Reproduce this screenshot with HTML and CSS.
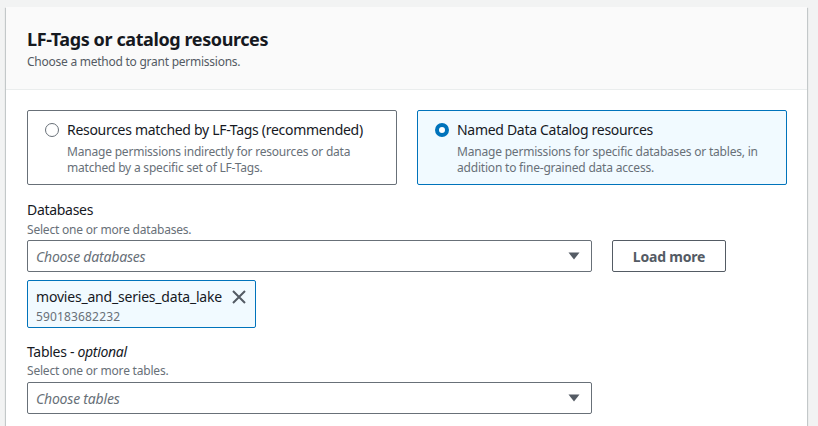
FILE: index.html
```html
<!DOCTYPE html>
<html>
<head>
<meta charset="utf-8">
<link rel="stylesheet" href="styles.css">
</head>
<body>
<div class="page">
  <section class="card">
    <header class="card-header">
      <h2 class="title">LF-Tags or catalog resources</h2>
      <p class="subtitle">Choose a method to grant permissions.</p>
    </header>
    <div class="card-body">
      <div class="tiles">
        <div class="tile">
          <span class="radio"></span>
          <div class="tile-text">
            <div class="tile-label">Resources matched by LF-Tags (recommended)</div>
            <div class="tile-desc">Manage permissions indirectly for resources or data matched by a specific set of LF-Tags.</div>
          </div>
        </div>
        <div class="tile selected">
          <span class="radio checked"></span>
          <div class="tile-text">
            <div class="tile-label">Named Data Catalog resources</div>
            <div class="tile-desc">Manage permissions for specific databases or tables, in addition to fine-grained data access.</div>
          </div>
        </div>
      </div>

      <div class="field">
        <div class="label">Databases</div>
        <div class="desc">Select one or more databases.</div>
        <div class="control-row">
          <div class="select">
            <span class="placeholder">Choose databases</span>
            <svg class="caret" width="12" height="8" viewBox="0 0 12 8"><path d="M0.5 0.5 H11.5 L6 7.5 Z" fill="#545b64"/></svg>
          </div>
          <button class="btn">Load more</button>
        </div>
        <div class="token">
          <div class="token-text">
            <div class="token-name">movies_and_series_data_lake</div>
            <div class="token-id">590183682232</div>
          </div>
          <svg class="token-x" width="16" height="16" viewBox="0 0 16 16"><path d="M2 2 L14 14 M14 2 L2 14" stroke="#545b64" stroke-width="2" fill="none"/></svg>
        </div>
      </div>

      <div class="field tables">
        <div class="label">Tables - <i>optional</i></div>
        <div class="desc">Select one or more tables.</div>
        <div class="control-row">
          <div class="select">
            <span class="placeholder">Choose tables</span>
            <svg class="caret" width="12" height="8" viewBox="0 0 12 8"><path d="M0.5 0.5 H11.5 L6 7.5 Z" fill="#545b64"/></svg>
          </div>
        </div>
      </div>
    </div>
  </section>
</div>
</body>
</html>
```
FILE: styles.css
```css
html, body {
  margin: 0;
  padding: 0;
  height: 100%;
  overflow: hidden;
}
body {
  background: #f2f3f3;
  font-family: "Noto Sans", "Open Sans", sans-serif;
  color: #16191f;
}
.page {
  padding: 7px 11px 0 6px;
}
.card {
  background: #ffffff;
  box-shadow: 0 1px 1px 0 rgba(0, 28, 36, 0.3), 1px 1px 1px 0 rgba(0, 28, 36, 0.15), -1px 1px 1px 0 rgba(0, 28, 36, 0.15);
  min-height: 500px;
}
.card-header {
  background: #fafafa;
  border-bottom: 1px solid #eaeded;
  padding: 21px 21px 19px;
}
.title {
  margin: 0;
  font-size: 18px;
  line-height: 22px;
  font-weight: 700;
  letter-spacing: -0.4px;
  color: #16191f;
}
.subtitle {
  margin: 4px 0 0;
  font-size: 12px;
  line-height: 16px;
  letter-spacing: -0.25px;
  color: #545b64;
}
.card-body {
  padding: 20px 21px 0;
}
.tiles {
  display: grid;
  grid-template-columns: 370px 370px;
  column-gap: 20px;
}
.tile {
  display: flex;
  align-items: flex-start;
  gap: 8px;
  border: 1px solid #687078;
  border-radius: 2px;
  padding: 9px 16px 8px 17px;
}
.tile.selected {
  border-color: #0073bb;
  background: #f1faff;
}
.radio {
  flex: none;
  box-sizing: border-box;
  width: 14px;
  height: 14px;
  margin-top: 3px;
  border-radius: 50%;
  border: 1px solid #687078;
  background: #fff;
}
.radio.checked {
  border: 4px solid #0073bb;
}
.tile-label {
  font-size: 14px;
  line-height: 20px;
  letter-spacing: -0.3px;
  color: #16191f;
}
.tile-desc {
  margin-top: 4px;
  font-size: 12px;
  line-height: 16px;
  letter-spacing: -0.2px;
  color: #687078;
}
.field {
  margin-top: 15px;
}
.field.tables {
  margin-top: 14px;
}
.label {
  height: 20px;
  font-size: 14px;
  line-height: 20px;
  letter-spacing: -0.3px;
  color: #16191f;
}
.desc {
  margin-top: 2px;
  font-size: 12px;
  line-height: 16px;
  letter-spacing: -0.2px;
  color: #687078;
}
.tables .desc {
  margin-top: 1px;
}
.control-row {
  display: flex;
  gap: 20px;
  margin-top: 2px;
}
.tables .control-row {
  margin-top: 3px;
}
.select {
  box-sizing: border-box;
  width: 565px;
  height: 32px;
  border: 1px solid #687078;
  border-radius: 2px;
  display: flex;
  align-items: center;
  justify-content: space-between;
  padding: 0 11px 0 8px;
}
.placeholder {
  font-style: italic;
  font-size: 14px;
  letter-spacing: -0.2px;
  color: #687078;
}
.caret {
  display: block;
}
.btn {
  box-sizing: border-box;
  width: 114px;
  height: 32px;
  border: 1px solid #545b64;
  border-radius: 2px;
  background: #fff;
  font-family: inherit;
  font-weight: 700;
  font-size: 14px;
  letter-spacing: -0.2px;
  color: #545b64;
  padding: 0;
}
.token {
  box-sizing: border-box;
  margin-top: 8px;
  width: 229px;
  height: 48px;
  border: 1px solid #0073bb;
  border-radius: 2px;
  background: #f1faff;
  display: flex;
  align-items: flex-start;
  justify-content: space-between;
  padding: 6px 8px 0 8px;
}
.token-name {
  font-size: 14px;
  line-height: 20px;
  letter-spacing: -0.2px;
  color: #16191f;
}
.token-id {
  margin-top: 2px;
  font-size: 12px;
  line-height: 16px;
  letter-spacing: 0.15px;
  color: #687078;
}
.token-x {
  margin-top: 2px;
}
```
